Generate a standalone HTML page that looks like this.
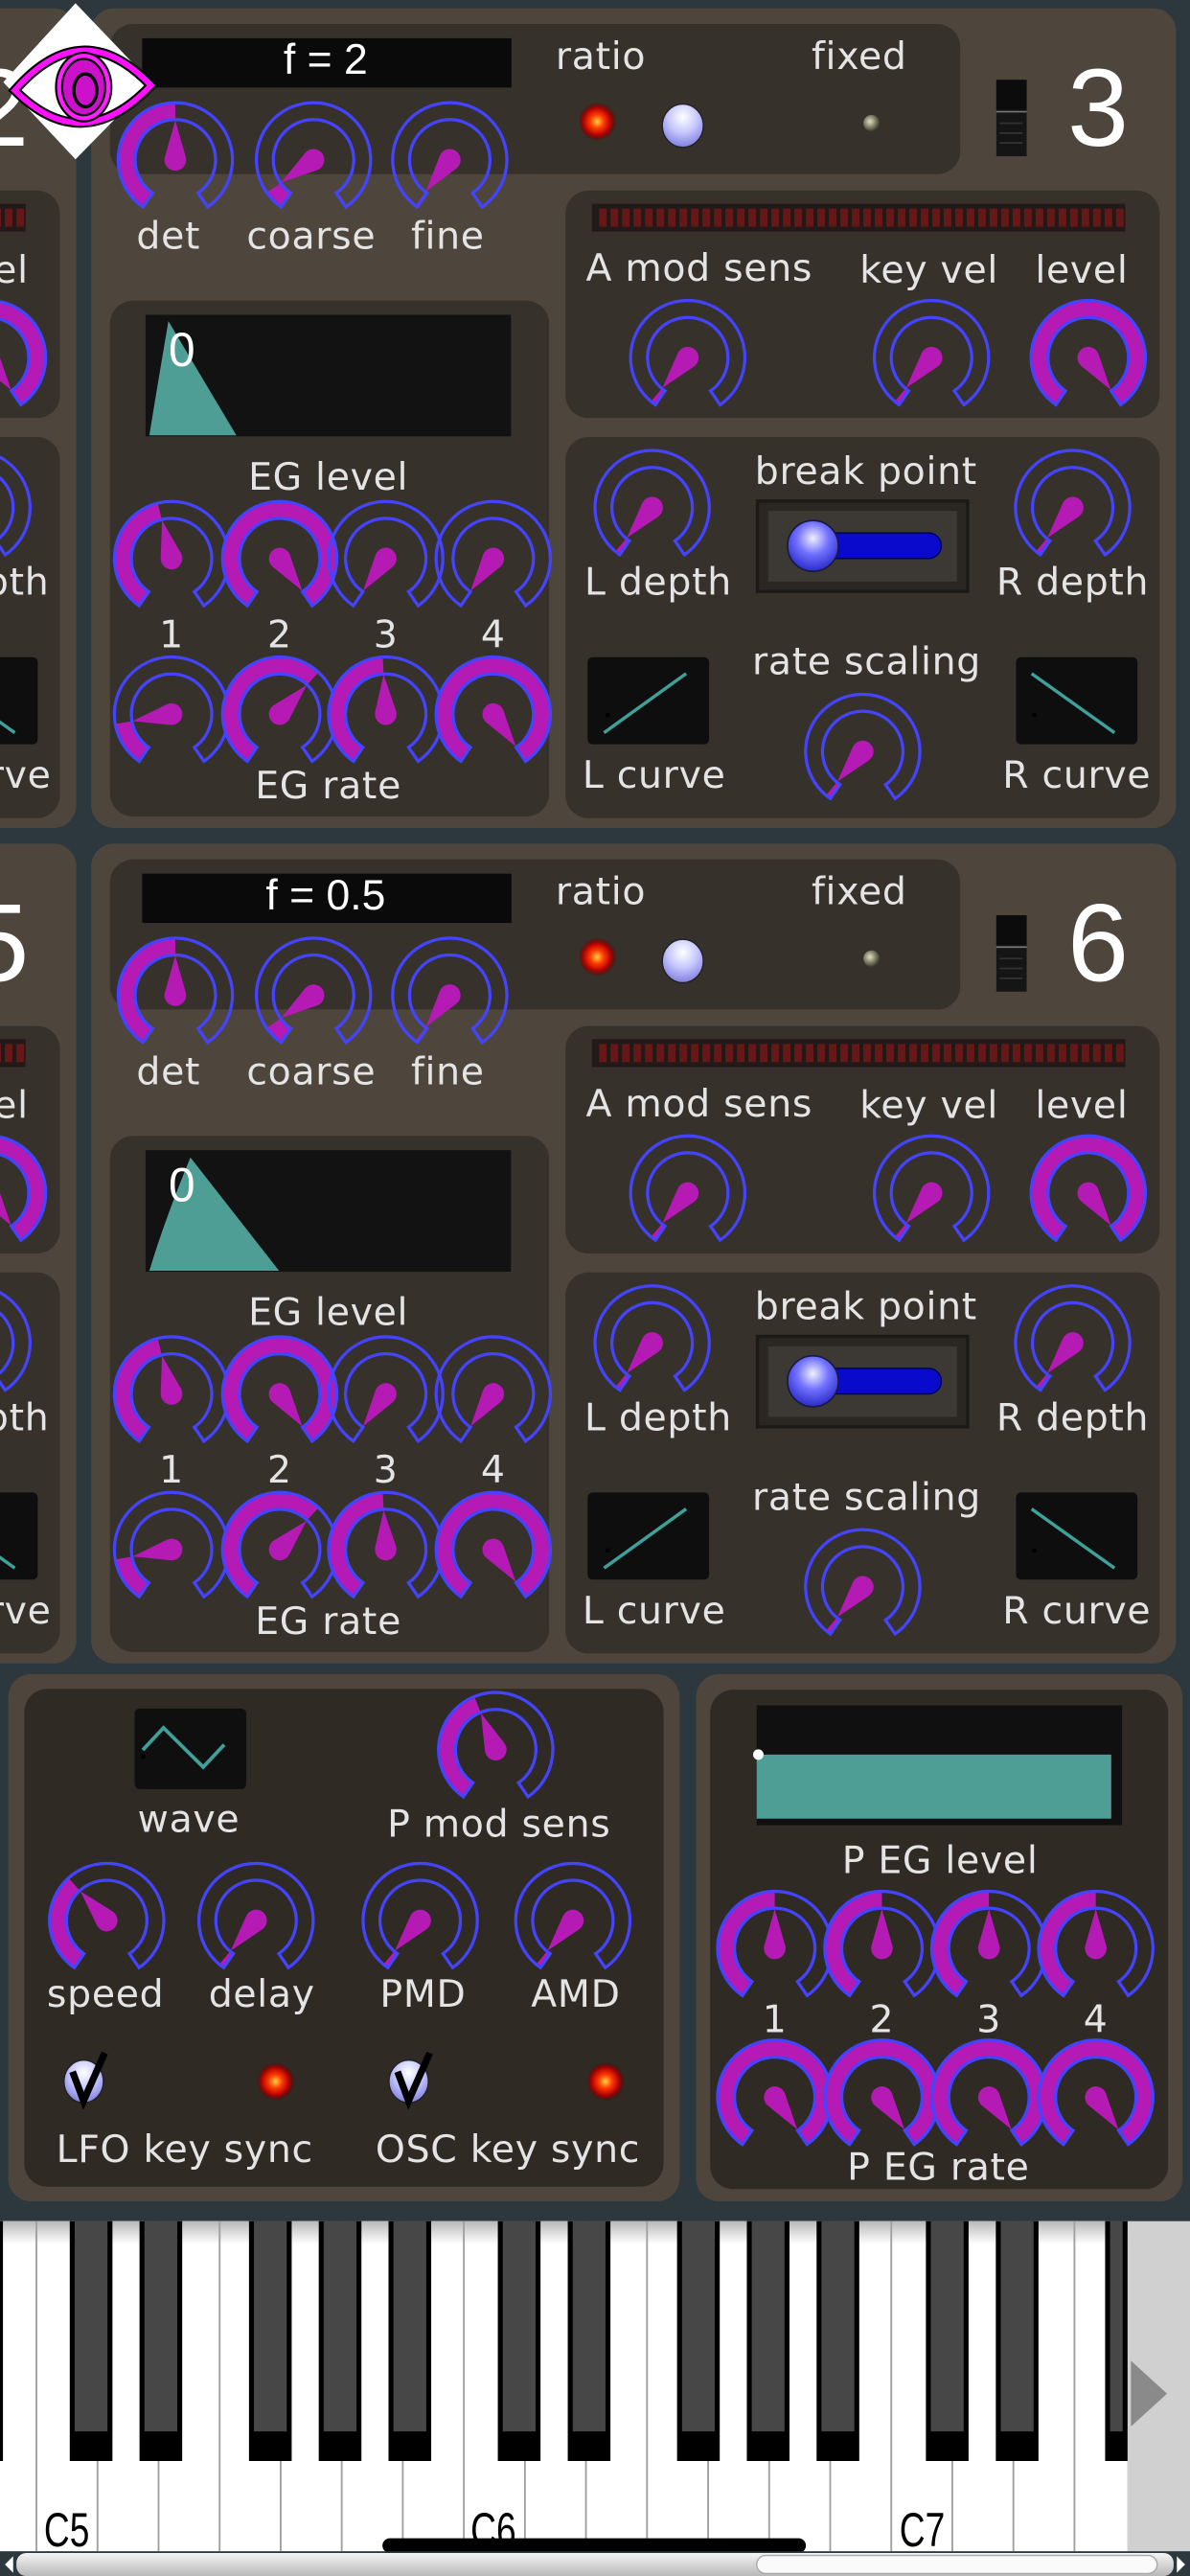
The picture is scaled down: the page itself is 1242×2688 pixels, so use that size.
<!DOCTYPE html>
<html><head><meta charset="utf-8">
<style>
html,body{margin:0;padding:0;background:#2c373e;}
svg{display:block}
.l{font-family:"DejaVu Sans","Liberation Sans",sans-serif;font-size:23px;fill:#e4e4e4;text-anchor:middle;letter-spacing:0.4px}
.n{font-family:"Liberation Sans",sans-serif;fill:#fff;text-anchor:middle}
</style></head><body>
<svg id="s" width="1242" height="2688" viewBox="0 0 725 1568" preserveAspectRatio="none" xmlns="http://www.w3.org/2000/svg">
<defs>
<radialGradient id="led" cx="0.45" cy="0.5" r="0.5"><stop offset="0" stop-color="#ffd040"/><stop offset="0.35" stop-color="#ff3a00"/><stop offset="0.7" stop-color="#b00000"/><stop offset="1" stop-color="#500000" stop-opacity="0"/></radialGradient>
<radialGradient id="ball" cx="0.5" cy="0.3" r="0.7"><stop offset="0" stop-color="#ffffff"/><stop offset="0.5" stop-color="#c8c8ff"/><stop offset="1" stop-color="#8080e0"/></radialGradient>
<radialGradient id="bball" cx="0.5" cy="0.35" r="0.7"><stop offset="0" stop-color="#f0f0ff"/><stop offset="0.45" stop-color="#7070ff"/><stop offset="1" stop-color="#2020c0"/></radialGradient>
<radialGradient id="dim" cx="0.4" cy="0.4" r="0.6"><stop offset="0" stop-color="#e0e0c0"/><stop offset="1" stop-color="#3a3a2a"/></radialGradient>
<linearGradient id="wk" x1="0" y1="0" x2="0" y2="1"><stop offset="0" stop-color="#b8b8b8"/><stop offset="1" stop-color="#ffffff"/></linearGradient>
<linearGradient id="sb" x1="0" y1="0" x2="0" y2="1"><stop offset="0" stop-color="#f4f4f4"/><stop offset="1" stop-color="#b8b8b8"/></linearGradient>
</defs>
<rect width="725" height="1568" fill="#2c373e"/>

<!-- ===== Operator 3 ===== -->
<g transform="translate(0,0)">
<rect x="55.5" y="5" width="661" height="499" rx="14" fill="#4e463d"/>
<rect x="67" y="14.6" width="518" height="91.4" rx="14" fill="#37312b"/>
<rect x="86.6" y="23.3" width="225" height="30" fill="#0a0a0a"/>
<text class="n" x="198.4" y="45" font-size="26">f = 2</text>
<text class="l" x="366" y="42">ratio</text><text class="l" x="523.5" y="42">fixed</text>
<circle cx="365" cy="74" r="12" fill="url(#led)"/>
<ellipse cx="416" cy="76.5" rx="12.5" ry="13.2" fill="url(#ball)" stroke="#222" stroke-width="0.8"/>
<circle cx="531" cy="75" r="5" fill="url(#dim)"/>
<rect x="607" y="48.6" width="18.5" height="46.5" fill="#151515"/><rect x="607" y="48.6" width="18.5" height="18" fill="#0c0c0c"/><line x1="607" y1="68" x2="625.5" y2="68" stroke="#777" stroke-width="1"/><line x1="609" y1="75" x2="623" y2="75" stroke="#333"/><line x1="609" y1="81" x2="623" y2="81" stroke="#333"/><line x1="609" y1="87" x2="623" y2="87" stroke="#333"/>
<text class="n" x="669" y="88.6" font-size="67">3</text>
<text class="l" x="102.6" y="151.5">det</text><text class="l" x="189.6" y="151.5">coarse</text><text class="l" x="272.8" y="151.5">fine</text>
<rect x="67" y="183" width="267.6" height="314" rx="14" fill="#37312b"/>
<rect x="88.7" y="191.6" width="222.6" height="74" fill="#131212"/>
<path d="M91 265 Q95 240 102.6 195.5 L144 265 Z" fill="#4f9e96"/>
<text class="n" x="110.8" y="222.7" font-size="29">0</text>
<text class="l" x="200" y="298">EG level</text>
<text class="l" x="104.5" y="394">1</text><text class="l" x="170.4" y="394">2</text><text class="l" x="235" y="394">3</text><text class="l" x="300.5" y="394">4</text>
<text class="l" x="200" y="486">EG rate</text>
<rect x="344.5" y="116" width="362" height="138.5" rx="14" fill="#37312b"/>
<rect x="360.6" y="124" width="325" height="17" fill="#221a18"/>
<g class="meter" data-x="365" data-y="127"></g>
<text class="l" x="426" y="171">A mod sens</text><text class="l" x="566" y="172">key vel</text><text class="l" x="659" y="172">level</text>
<rect x="344.5" y="266" width="362" height="232" rx="14" fill="#37312b"/>
<text class="l" x="527.6" y="294.6">break point</text>
<rect x="461.5" y="305" width="128" height="55" fill="#2a2622" stroke="#1c1a17" stroke-width="2"/>
<rect x="468" y="311" width="115" height="43" fill="#3c3833"/>
<rect x="496" y="324.4" width="77.5" height="15.6" rx="7.8" fill="#0a0acc" stroke="#00004a" stroke-width="0.8"/>
<circle cx="495.3" cy="332.3" r="15.5" fill="url(#bball)" stroke="#1a1a40" stroke-width="1"/>
<text class="l" x="401" y="362">L depth</text><text class="l" x="653.5" y="362">R depth</text>
<text class="l" x="528" y="410.5">rate scaling</text>
<rect x="358" y="400" width="74" height="53" rx="3" fill="#0e0e0e"/><line x1="368" y1="446" x2="418" y2="410" stroke="#3fa09a" stroke-width="2"/><rect x="369" y="434" width="2.5" height="2.5" fill="#000"/>
<rect x="619" y="400" width="74" height="53" rx="3" fill="#0e0e0e"/><line x1="628.5" y1="410" x2="679" y2="446" stroke="#3fa09a" stroke-width="2"/><rect x="629" y="434" width="2.5" height="2.5" fill="#000"/>
<text class="l" x="398.5" y="479.6">L curve</text><text class="l" x="656" y="479.6">R curve</text>
</g>

<!-- ===== Operator 6 ===== -->
<g transform="translate(0,508.5)">
<rect x="55.5" y="5" width="661" height="499" rx="14" fill="#4e463d"/>
<rect x="67" y="14.6" width="518" height="91.4" rx="14" fill="#37312b"/>
<rect x="86.6" y="23.3" width="225" height="30" fill="#0a0a0a"/>
<text class="n" x="198.4" y="45" font-size="26">f = 0.5</text>
<text class="l" x="366" y="42">ratio</text><text class="l" x="523.5" y="42">fixed</text>
<circle cx="365" cy="74" r="12" fill="url(#led)"/>
<ellipse cx="416" cy="76.5" rx="12.5" ry="13.2" fill="url(#ball)" stroke="#222" stroke-width="0.8"/>
<circle cx="531" cy="75" r="5" fill="url(#dim)"/>
<rect x="607" y="48.6" width="18.5" height="46.5" fill="#151515"/><rect x="607" y="48.6" width="18.5" height="18" fill="#0c0c0c"/><line x1="607" y1="68" x2="625.5" y2="68" stroke="#777" stroke-width="1"/><line x1="609" y1="75" x2="623" y2="75" stroke="#333"/><line x1="609" y1="81" x2="623" y2="81" stroke="#333"/><line x1="609" y1="87" x2="623" y2="87" stroke="#333"/>
<text class="n" x="669" y="88.6" font-size="67">6</text>
<text class="l" x="102.6" y="151.5">det</text><text class="l" x="189.6" y="151.5">coarse</text><text class="l" x="272.8" y="151.5">fine</text>
<rect x="67" y="183" width="267.6" height="314" rx="14" fill="#37312b"/>
<rect x="88.7" y="191.6" width="222.6" height="74" fill="#131212"/>
<path d="M91 265 Q100 235 116 196 L170 265 Z" fill="#4f9e96"/>
<text class="n" x="110.8" y="222.7" font-size="29">0</text>
<text class="l" x="200" y="298">EG level</text>
<text class="l" x="104.5" y="394">1</text><text class="l" x="170.4" y="394">2</text><text class="l" x="235" y="394">3</text><text class="l" x="300.5" y="394">4</text>
<text class="l" x="200" y="486">EG rate</text>
<rect x="344.5" y="116" width="362" height="138.5" rx="14" fill="#37312b"/>
<rect x="360.6" y="124" width="325" height="17" fill="#221a18"/>
<g class="meter" data-x="365" data-y="127"></g>
<text class="l" x="426" y="171">A mod sens</text><text class="l" x="566" y="172">key vel</text><text class="l" x="659" y="172">level</text>
<rect x="344.5" y="266" width="362" height="232" rx="14" fill="#37312b"/>
<text class="l" x="527.6" y="294.6">break point</text>
<rect x="461.5" y="305" width="128" height="55" fill="#2a2622" stroke="#1c1a17" stroke-width="2"/>
<rect x="468" y="311" width="115" height="43" fill="#3c3833"/>
<rect x="496" y="324.4" width="77.5" height="15.6" rx="7.8" fill="#0a0acc" stroke="#00004a" stroke-width="0.8"/>
<circle cx="495.3" cy="332.3" r="15.5" fill="url(#bball)" stroke="#1a1a40" stroke-width="1"/>
<text class="l" x="401" y="362">L depth</text><text class="l" x="653.5" y="362">R depth</text>
<text class="l" x="528" y="410.5">rate scaling</text>
<rect x="358" y="400" width="74" height="53" rx="3" fill="#0e0e0e"/><line x1="368" y1="446" x2="418" y2="410" stroke="#3fa09a" stroke-width="2"/><rect x="369" y="434" width="2.5" height="2.5" fill="#000"/>
<rect x="619" y="400" width="74" height="53" rx="3" fill="#0e0e0e"/><line x1="628.5" y1="410" x2="679" y2="446" stroke="#3fa09a" stroke-width="2"/><rect x="629" y="434" width="2.5" height="2.5" fill="#000"/>
<text class="l" x="398.5" y="479.6">L curve</text><text class="l" x="656" y="479.6">R curve</text>
</g>

<!-- ===== Partial operators 2 and 5 ===== -->
<g transform="translate(-670,0)">
<rect x="55.5" y="5" width="661" height="499" rx="14" fill="#4e463d"/>
<rect x="67" y="14.6" width="518" height="91.4" rx="14" fill="#37312b"/>
<text class="n" x="669" y="88.6" font-size="67">2</text>
<rect x="344.5" y="116" width="362" height="138.5" rx="14" fill="#37312b"/>
<rect x="360.6" y="124" width="325" height="17" fill="#221a18"/>
<g class="meter" data-x="365" data-y="127"></g>
<text class="l" x="659" y="172">level</text>
<rect x="344.5" y="266" width="362" height="232" rx="14" fill="#37312b"/>
<text class="l" x="653.5" y="362">R depth</text>
<rect x="619" y="400" width="74" height="53" rx="3" fill="#0e0e0e"/><line x1="628.5" y1="410" x2="679" y2="446" stroke="#3fa09a" stroke-width="2"/>
<text class="l" x="656" y="479.6">R curve</text>
</g>
<g transform="translate(-670,508.5)">
<rect x="55.5" y="5" width="661" height="499" rx="14" fill="#4e463d"/>
<rect x="67" y="14.6" width="518" height="91.4" rx="14" fill="#37312b"/>
<text class="n" x="669" y="88.6" font-size="67">5</text>
<rect x="344.5" y="116" width="362" height="138.5" rx="14" fill="#37312b"/>
<rect x="360.6" y="124" width="325" height="17" fill="#221a18"/>
<g class="meter" data-x="365" data-y="127"></g>
<text class="l" x="659" y="172">level</text>
<rect x="344.5" y="266" width="362" height="232" rx="14" fill="#37312b"/>
<text class="l" x="653.5" y="362">R depth</text>
<rect x="619" y="400" width="74" height="53" rx="3" fill="#0e0e0e"/><line x1="628.5" y1="410" x2="679" y2="446" stroke="#3fa09a" stroke-width="2"/>
<text class="l" x="656" y="479.6">R curve</text>
</g>

<!-- ===== LFO panel ===== -->
<rect x="5" y="1019" width="409" height="321" rx="14" fill="#4e463d"/>
<rect x="14.8" y="1028" width="389.5" height="303" rx="14" fill="#302a25"/>
<rect x="82" y="1040" width="68" height="49" rx="3" fill="#0f0f0f"/>
<polyline points="87,1065.2 99.6,1051.7 123.8,1075.6 136.6,1062" fill="none" stroke="#3fa09a" stroke-width="2.2"/>
<rect x="86" y="1068" width="2.5" height="2.5" fill="#000"/>
<text class="l" x="115" y="1115">wave</text>
<text class="l" x="304" y="1118">P mod sens</text>
<text class="l" x="64.3" y="1221.5">speed</text><text class="l" x="159.5" y="1221.5">delay</text><text class="l" x="257.7" y="1221.5">PMD</text><text class="l" x="350.8" y="1221.5">AMD</text>
<ellipse cx="51" cy="1267" rx="12" ry="13" fill="url(#ball)" stroke="#222" stroke-width="0.8"/>
<polyline points="44.2,1261 50.9,1278.8 63.8,1249.6" fill="none" stroke="#000" stroke-width="4.2"/>
<circle cx="169" cy="1267" r="12" fill="url(#led)"/>
<ellipse cx="249" cy="1267" rx="12" ry="13" fill="url(#ball)" stroke="#222" stroke-width="0.8"/>
<polyline points="242.2,1261 248.9,1278.8 261.8,1249.6" fill="none" stroke="#000" stroke-width="4.2"/>
<circle cx="370" cy="1267" r="12" fill="url(#led)"/>
<text class="l" x="112.5" y="1316">LFO key sync</text><text class="l" x="309.4" y="1316">OSC key sync</text>

<!-- ===== P EG panel ===== -->
<rect x="424" y="1019" width="296.5" height="321" rx="14" fill="#4e463d"/>
<rect x="432.7" y="1028.5" width="279" height="304" rx="14" fill="#302a25"/>
<rect x="461" y="1038" width="222.6" height="73" fill="#111010"/>
<rect x="461" y="1068" width="216" height="39" fill="#4f9e96"/>
<circle cx="462" cy="1068" r="3.2" fill="#fff"/>
<text class="l" x="572.7" y="1140">P EG level</text>
<text class="l" x="472" y="1237">1</text><text class="l" x="537.3" y="1237">2</text><text class="l" x="602.5" y="1237">3</text><text class="l" x="667.6" y="1237">4</text>
<text class="l" x="571.7" y="1326.7">P EG rate</text>

<g id="knobs"></g>

<!-- ===== Keyboard ===== -->
<rect x="0" y="1352" width="687" height="201" fill="#ffffff"/>
<rect x="0" y="1352" width="687" height="14" fill="url(#wk)"/>
<rect x="0" y="1352" width="1.8" height="146" fill="#000"/>
<g id="keys"></g>
<rect x="687" y="1352" width="38" height="201" fill="#d0d0d0"/>
<polygon points="689,1437 711,1457 689,1477" fill="#8a8a8a"/>
<text x="26.8" y="1550" font-family="Liberation Sans, sans-serif" font-size="29" textLength="27.7" lengthAdjust="spacingAndGlyphs" fill="#000">C5</text>
<text x="286.7" y="1550" font-family="Liberation Sans, sans-serif" font-size="29" textLength="27.7" lengthAdjust="spacingAndGlyphs" fill="#000">C6</text>
<text x="548" y="1550" font-family="Liberation Sans, sans-serif" font-size="29" textLength="27.7" lengthAdjust="spacingAndGlyphs" fill="#000">C7</text>
<rect x="233" y="1545" width="258" height="9" rx="4.5" fill="#000"/>
<rect x="0" y="1553" width="725" height="15" fill="#2c373e"/>
<rect x="10" y="1554" width="705" height="14" rx="6" fill="url(#sb)"/>
<rect x="461" y="1555.5" width="244" height="11" rx="5.5" fill="#fafafa" stroke="#a8a8a8" stroke-width="0.8"/>
<polygon points="8,1556 3,1561 8,1566" fill="#fff"/>
<polygon points="717,1556 722,1561 717,1566" fill="#fff"/>

<!-- ===== Eye logo ===== -->
<polygon points="46,2 92,50 46,97 2,50" fill="#ffffff"/>
<path d="M9 55 Q50 8 92 52 Q50 96 9 55 Z" fill="#fff" stroke="#000" stroke-width="6"/>
<path d="M9 55 Q50 8 92 52 Q50 96 9 55 Z" fill="none" stroke="#ff10ff" stroke-width="3.5"/>
<ellipse cx="51" cy="53" rx="15" ry="19" fill="#cc10cc" stroke="#000" stroke-width="5"/>
<ellipse cx="51" cy="53" rx="15" ry="19" fill="none" stroke="#ff20ff" stroke-width="2.5"/>
<ellipse cx="52" cy="55" rx="7" ry="10" fill="none" stroke="#000" stroke-width="2"/>
</svg>
<script>
(function(){
function P(cx,cy,r,a){a=a*Math.PI/180;return (cx+r*Math.sin(a)).toFixed(2)+","+(cy-r*Math.cos(a)).toFixed(2);}
function knob(cx,cy,v){
 var R=34.8,r=24.5,S=145.5,s="";
 if(v>-S+0.5){var la=(v+S)>180?1:0;
  s+='<path d="M'+P(cx,cy,R,-S)+' A'+R+' '+R+' 0 '+la+' 1 '+P(cx,cy,R,v)+' L'+P(cx,cy,r,v)+' A'+r+' '+r+' 0 '+la+' 0 '+P(cx,cy,r,-S)+'Z" fill="#b51ab5"/>';}
 s+='<path d="M'+P(cx,cy,R,-S)+' A'+R+' '+R+' 0 1 1 '+P(cx,cy,R,S)+' L'+P(cx,cy,r,S)+' A'+r+' '+r+' 0 1 0 '+P(cx,cy,r,-S)+'Z" fill="none" stroke="#4444ff" stroke-width="1.9" stroke-linejoin="miter"/>';
 var L=24,rb=6.6,b=Math.acos(rb/L)*180/Math.PI;
 s+='<path d="M'+P(cx,cy,L,v)+' L'+P(cx,cy,rb,v+b)+' A'+rb+' '+rb+' 0 1 1 '+P(cx,cy,rb,v-b)+'Z" fill="#b51ab5"/>';
 return s;}
var k=[];
function op(dx,oy){
 var T=[[106.8,97.3,0],[191,97.3,-125],[274,97.3,-143],
 [104.5,340,-14],[170.4,340,145],[235,340,-145],[300.5,340,-145],
 [104.5,434.7,-100],[170.4,434.7,43],[235,434.7,-3],[300.5,434.7,145],
 [419,217.7,-140],[567.5,217.7,-140],[663,217.7,145],
 [397.3,309,-140],[653.5,309,-140],[525.6,457.4,-140]];
 T.forEach(function(t){if(t[0]+dx>-50)k.push(knob(t[0]+dx,t[1]+oy,t[2]));});}
op(0,0);op(0,508.5);op(-670,0);op(-670,508.5);
[[302,1065,-22],[65,1169,-42],[156,1169,-140],[256,1169,-140],[349,1169,-140]].forEach(function(t){k.push(knob(t[0],t[1],t[2]));});
[472,537.3,602.5,667.6].forEach(function(x){k.push(knob(x,1186,0));k.push(knob(x,1276.6,145));});
document.getElementById("knobs").innerHTML=k.join("");
var m=document.querySelectorAll(".meter");
for(var i=0;i<m.length;i++){var h="";for(var j=0;j<46;j++){h+='<rect x="'+(365+j*7)+'" y="127" width="4.6" height="11" fill="#661818"/>';}m[i].innerHTML=h;}
var s="";
for(var x=22.2;x<687;x+=37.2){s+='<line x1="'+x.toFixed(1)+'" y1="1352" x2="'+x.toFixed(1)+'" y2="1553" stroke="#a0a0a0" stroke-width="1.1"/>';}
[42.5,85,151.7,194.2,236.7,303.3,345.9,412.5,455,497.5,564.1,606.7,673.3].forEach(function(x){
 var w=Math.min(26,687-x);
 s+='<rect x="'+x+'" y="1352" width="'+w+'" height="146" fill="#000"/>';
 s+='<rect x="'+(x+3)+'" y="1352" width="'+Math.max(0,w-6)+'" height="128" fill="#474747"/>';});
document.getElementById("keys").innerHTML=s;
})();
</script>
</body></html>
